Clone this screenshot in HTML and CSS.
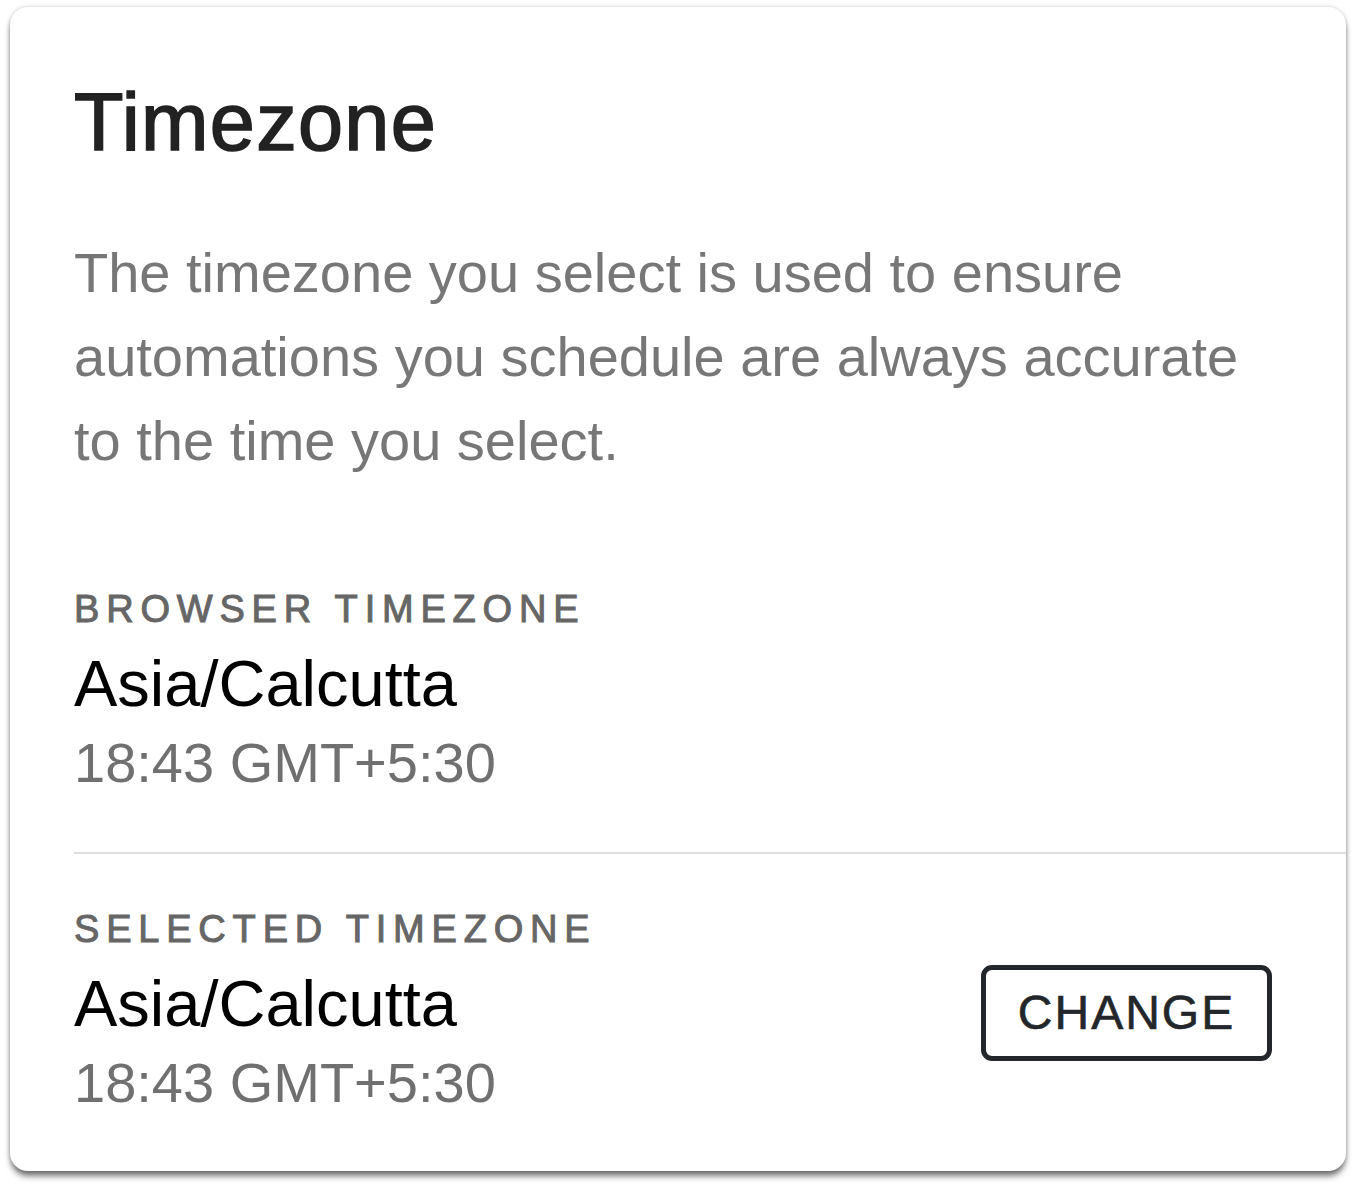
FILE: index.html
```html
<!DOCTYPE html>
<html lang="en">
<head>
  <meta charset="UTF-8" />
  <meta name="viewport" content="width=device-width, initial-scale=1.0"/>
  <title>Timezone</title>
  <link rel="stylesheet" href="styles.css">
</head>
<body>
  <div class="card">
    <h2>Timezone</h2>
    <p class="intro">The timezone you select is used to ensure automations you schedule are always accurate to the time you select.</p>

    <div class="tz-list">
      <div class="tz-row">
        <div class="tz-info">
          <div class="tz-label">Browser Timezone</div>
          <div class="tz-name">Asia/Calcutta</div>
          <div class="tz-time">18:43 GMT+5:30</div>
        </div>
      </div>
      <div class="tz-row">
        <div class="tz-info">
          <div class="tz-label">Selected Timezone</div>
          <div class="tz-name">Asia/Calcutta</div>
          <div class="tz-time">18:43 GMT+5:30</div>
        </div>
        <button class="btn-change">Change</button>
      </div>
    </div>
  </div>
</body>
</html>
```

FILE: styles.css
```css
:root {
  --text-dark: #222;
  --text-muted: #777;
  --label-color: #666;
  --divider: #dedede;
  --radius: 18px;
}
* { box-sizing: border-box; }
body {
  margin: 0;
  min-height: 1188px;
  background: #fff;
  font-family: "Liberation Sans", Arial, Helvetica, sans-serif;
  color: var(--text-dark);
}
.card {
  margin: 7px 10px 0;
  padding: 67px 64px 52px;
  background: #fff;
  border-radius: var(--radius);
  box-shadow: 0 0 4px rgba(0,0,0,0.2), 0 6px 6px -1px rgba(0,0,0,0.55);
}
h2 {
  margin: 0;
  font-size: 81px;
  line-height: 96px;
  font-weight: 400;
  letter-spacing: 1.3px;
  -webkit-text-stroke: 1.6px var(--text-dark);
  color: var(--text-dark);
}
.intro {
  margin: 61px 0 51px;
  font-size: 56px;
  line-height: 84px;
  color: var(--text-muted);
}
.tz-list { margin-right: -64px; }
.tz-row {
  display: flex;
  align-items: center;
  justify-content: space-between;
  padding: 52px 74px 53px 0;
  border-bottom: 2px solid var(--divider);
}
.tz-row:last-child { border-bottom: none; padding-bottom: 0; }
.tz-label {
  font-size: 38px;
  line-height: 46px;
  font-weight: 400;
  -webkit-text-stroke: 1px var(--label-color);
  letter-spacing: 6.8px;
  text-transform: uppercase;
  color: var(--label-color);
  margin-bottom: 14px;
}
.tz-name {
  font-size: 65px;
  line-height: 76px;
  color: #000;
}
.tz-time {
  margin-top: 5px;
  font-size: 56px;
  line-height: 72px;
  color: #707070;
}
.btn-change {
  width: 291px;
  height: 96px;
  padding: 0;
  background: #fff;
  border: 5px solid #23262a;
  border-radius: 11px;
  font-family: inherit;
  font-size: 48px;
  letter-spacing: 2px;
  text-transform: uppercase;
  -webkit-text-stroke: 0.6px #23262a;
  color: #23262a;
  cursor: pointer;
}
```
